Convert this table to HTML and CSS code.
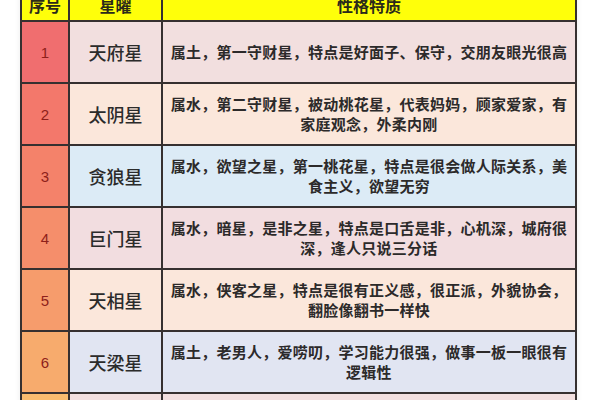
FILE: index.html
```html
<!DOCTYPE html>
<html lang="zh">
<head>
<meta charset="utf-8">
<link rel="stylesheet" href="styles.css">
</head>
<body>
<div class="page">
  <div class="table">
    <div class="cell head">序号</div>
    <div class="cell head">星曜</div>
    <div class="cell head">性格特质</div>

    <div class="cell num n1">1</div>
    <div class="cell name r-pink">天府星</div>
    <div class="cell desc r-pink">属土，第一守财星，特点是好面子、保守，交朋友眼光很高</div>

    <div class="cell num n2">2</div>
    <div class="cell name r-peach">太阴星</div>
    <div class="cell desc r-peach">属水，第二守财星，被动桃花星，代表妈妈，顾家爱家，有<br>家庭观念，外柔内刚</div>

    <div class="cell num n3">3</div>
    <div class="cell name r-blue">贪狼星</div>
    <div class="cell desc r-blue">属水，欲望之星，第一桃花星，特点是很会做人际关系，美<br>食主义，欲望无穷</div>

    <div class="cell num n4">4</div>
    <div class="cell name r-pink2">巨门星</div>
    <div class="cell desc r-pink2">属水，暗星，是非之星，特点是口舌是非，心机深，城府很<br>深，逢人只说三分话</div>

    <div class="cell num n5">5</div>
    <div class="cell name r-peach">天相星</div>
    <div class="cell desc r-peach">属水，侠客之星，特点是很有正义感，很正派，外貌协会，<br>翻脸像翻书一样快</div>

    <div class="cell num n6">6</div>
    <div class="cell name r-lav">天梁星</div>
    <div class="cell desc r-lav">属土，老男人，爱唠叨，学习能力很强，做事一板一眼很有<br>逻辑性</div>

    <div class="cell num n7">7</div>
    <div class="cell name r-pink">七杀星</div>
    <div class="cell desc r-pink">属金，将星，特点是冲劲十足，敢闯敢拼</div>
  </div>
</div>
</body>
</html>
```

FILE: styles.css
```css
html, body {
  margin: 0;
  padding: 0;
  background: #ffffff;
  overflow: hidden;
}

.page {
  width: 600px;
  height: 400px;
  overflow: hidden;
}

.table {
  margin: -12px 0 0 20px;
  width: 557px;
  display: grid;
  grid-template-columns: 46px 91px 412px;
  grid-template-rows: 30px repeat(7, 60px);
  gap: 2px;
  padding: 2px;
  box-sizing: border-box;
  background: #363030;
  box-shadow: 0 0 6px rgba(0, 0, 0, 0.08);
  font-family: "Noto Sans CJK SC", "Noto Sans", sans-serif;
}

.cell {
  display: flex;
  align-items: center;
  justify-content: center;
  text-align: center;
}

.head {
  background: #ffff0a;
  color: #2a2a1a;
  font-size: 16px;
  font-weight: 700;
}

.num {
  font-family: "Liberation Sans", Arial, sans-serif;
  font-size: 15px;
  color: #8e1f1a;
}

.n1 { background: #f06e6f; }
.n2 { background: #f3786b; }
.n3 { background: #f4826a; }
.n4 { background: #f58e6b; }
.n5 { background: #f69c6c; }
.n6 { background: #f7ab6d; }
.n7 { background: #f9bc6f; }

.name {
  font-size: 18px;
  font-weight: 500;
  color: #2b2b2b;
}

.desc {
  font-size: 15px;
  font-weight: 700;
  line-height: 20px;
  color: #2c2a2a;
  letter-spacing: 0.25px;
}

.r-pink { background: #f2dfdf; }
.r-peach { background: #fbe7db; }
.r-blue { background: #dcebf6; }
.r-pink2 { background: #f2dde0; }
.r-lav { background: #e1e5f2; }
```
